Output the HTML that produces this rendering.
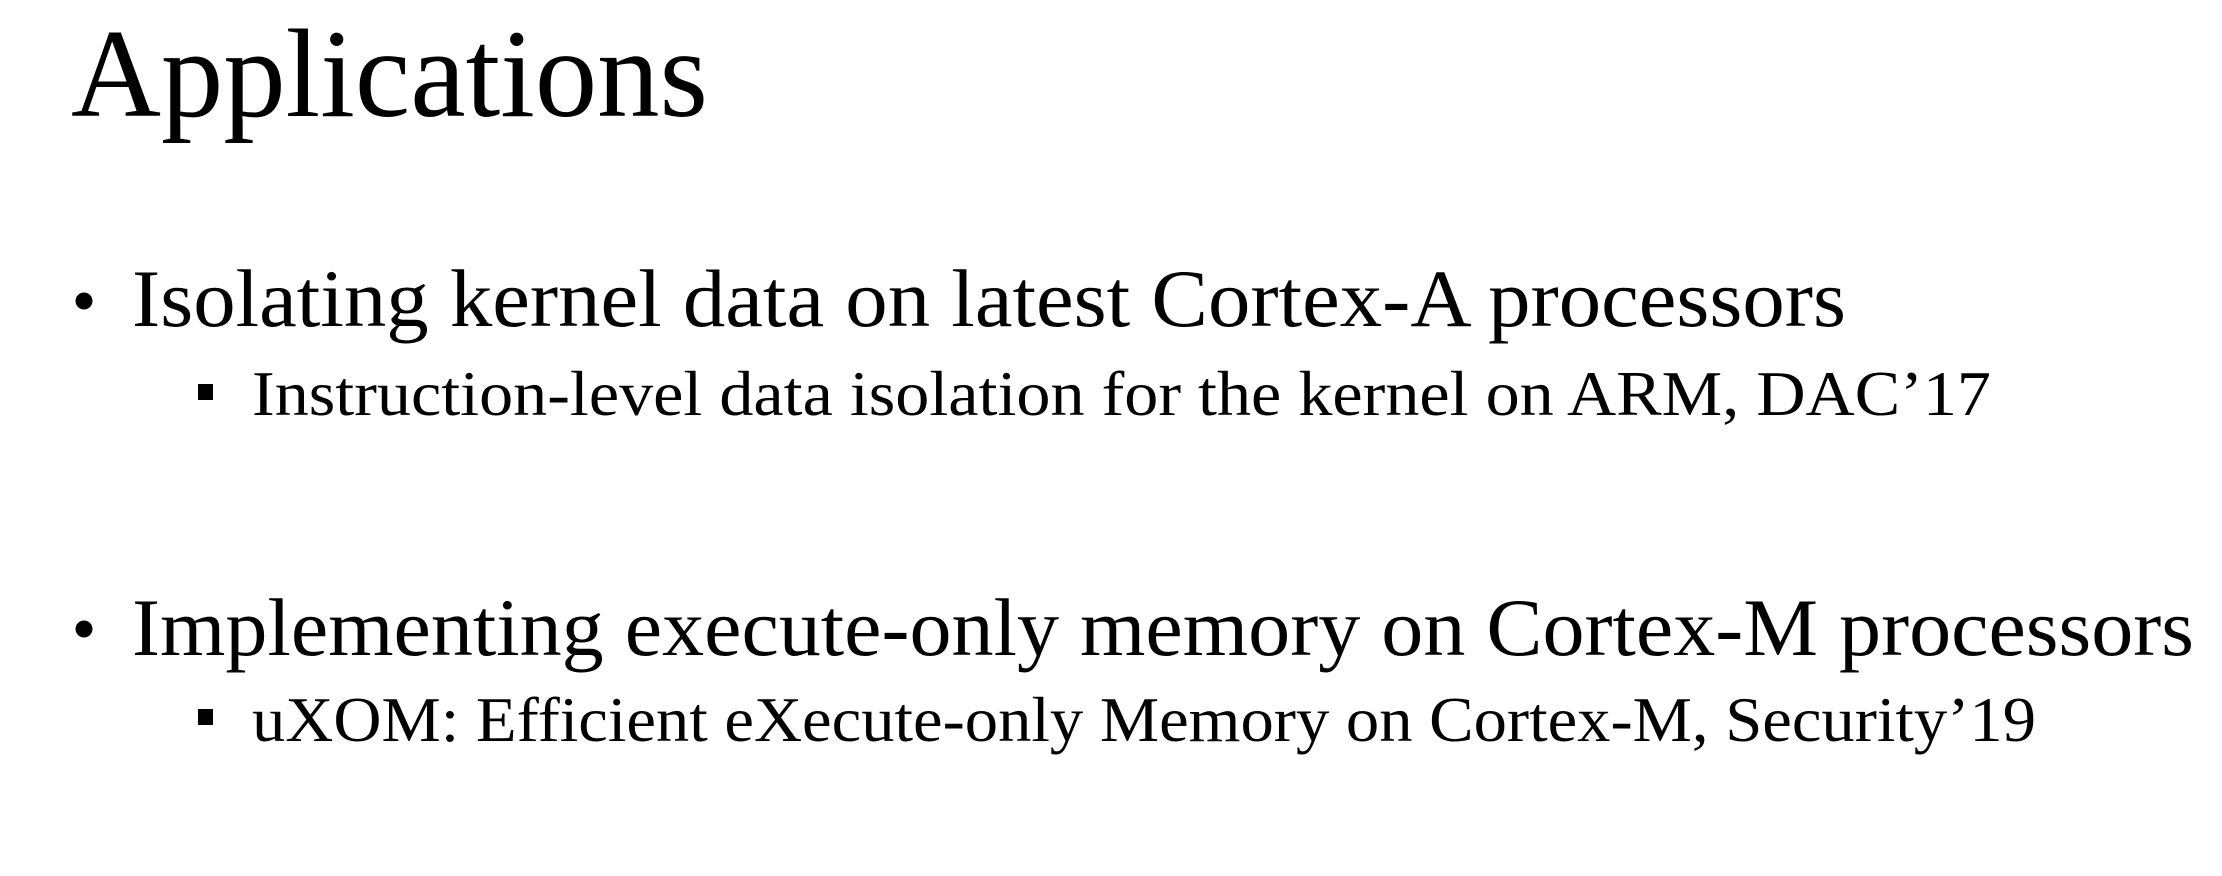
<!DOCTYPE html>
<html><head><meta charset="utf-8"><style>
html,body{margin:0;padding:0;background:#fff;width:2222px;height:876px;overflow:hidden}
svg{display:block}
text{font-family:"Liberation Serif",serif;fill:#000}
</style></head><body>
<svg width="2222" height="876" viewBox="0 0 2222 876">
<text x="71" y="116" font-size="126" textLength="637" lengthAdjust="spacingAndGlyphs">Applications</text>
<circle cx="84" cy="301" r="8.5" fill="#000"/>
<text x="132" y="326" font-size="82" textLength="1714" lengthAdjust="spacingAndGlyphs">Isolating kernel data on latest Cortex-A processors</text>
<rect x="198" y="384" width="15" height="16" fill="#000"/>
<text x="252" y="415" font-size="64" textLength="1739" lengthAdjust="spacingAndGlyphs">Instruction-level data isolation for the kernel on ARM, DAC’17</text>
<circle cx="84" cy="629" r="8.5" fill="#000"/>
<text x="132" y="655" font-size="82" textLength="2062" lengthAdjust="spacingAndGlyphs">Implementing execute-only memory on Cortex-M processors</text>
<rect x="198" y="709" width="15" height="16" fill="#000"/>
<text x="252" y="741" font-size="64" textLength="1784" lengthAdjust="spacingAndGlyphs">uXOM: Efficient eXecute-only Memory on Cortex-M, Security’19</text>
</svg>
</body></html>
